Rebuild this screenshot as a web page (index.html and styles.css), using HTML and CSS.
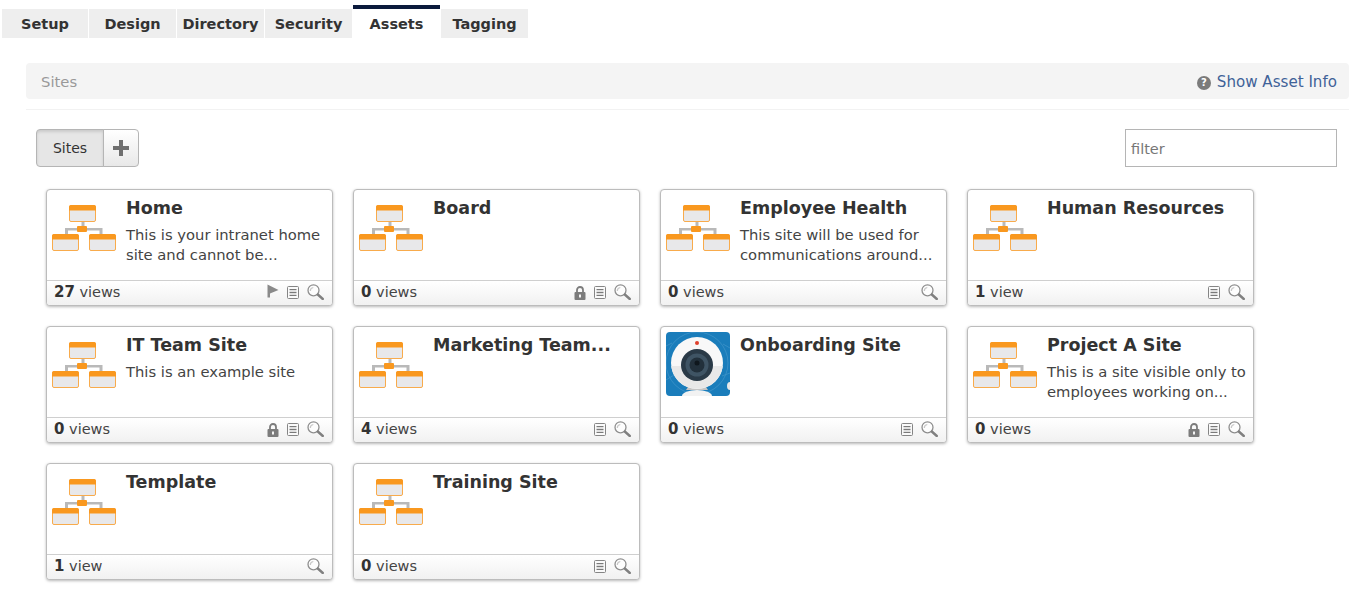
FILE: index.html
```html
<!DOCTYPE html>
<html lang="en">
<head>
<meta charset="utf-8">
<title>Assets</title>
<link rel="stylesheet" href="styles.css">
</head>
<body>
<svg class="defs" width="0" height="0" aria-hidden="true">
  <defs>
    <symbol id="site" viewBox="0 0 64 46">
      <path d="M29.500 16h3v6h-3zM13 23h37v2.500H13zM13 23h3v7h-3zM47.500 23h3v7h-3z" fill="#b9b9b9"/>
      <rect x="25" y="21" width="10" height="6" rx="1" fill="#f9981f"/>
      <rect x="17.500" y="0.500" width="26" height="16" rx="1.500" fill="#e8e8ea" stroke="#f8ab4c"/>
      <path d="M17 2a2 2 0 0 1 2-2h23a2 2 0 0 1 2 2v3.500H17z" fill="#f9981f"/>
      <rect x="0.500" y="29.500" width="26" height="16" rx="1.500" fill="#e8e8ea" stroke="#f8ab4c"/>
      <path d="M0 31a2 2 0 0 1 2-2h23a2 2 0 0 1 2 2v3.500H0z" fill="#f9981f"/>
      <rect x="37.500" y="29.500" width="26" height="16" rx="1.500" fill="#e8e8ea" stroke="#f8ab4c"/>
      <path d="M37 31a2 2 0 0 1 2-2h23a2 2 0 0 1 2 2v3.500H37z" fill="#f9981f"/>
    </symbol>
    <symbol id="flag" viewBox="0 0 12 14">
      <path d="M0.500 0.500 11.500 6 3 9.500V13.500H0.500z" fill="#8a8a8a"/>
    </symbol>
    <symbol id="doc" viewBox="0 0 12 13">
      <rect x="0.500" y="0.500" width="11" height="12" rx="1" fill="#fafafa" stroke="#858585"/>
      <path d="M2.500 3.500h7M2.500 6.500h7M2.500 9.500h7" stroke="#7a7a7a" stroke-width="1"/>
      <path d="M2.500 5h7M2.500 8h7" stroke="#c4c4c4" stroke-width="1"/>
    </symbol>
    <symbol id="lens" viewBox="0 0 17 16">
      <circle cx="6.500" cy="6.300" r="5.500" fill="#fdfdfd" stroke="#8f8f8f" stroke-width="1.300"/>
      <path d="M3.300 7a3.500 3.500 0 0 1 3-3.500" fill="none" stroke="#c8c8c8" stroke-width="1.200"/>
      <path d="M10.800 10.500l5 4.500" stroke="#808080" stroke-width="2.400" stroke-linecap="round"/>
    </symbol>
    <symbol id="lock" viewBox="0 0 12 14">
      <path d="M3 6V4a3 3 0 0 1 6 0v2" fill="none" stroke="#7c7c7c" stroke-width="1.800"/>
      <rect x="0.500" y="6" width="11" height="8" rx="1" fill="#7c7c7c"/>
      <rect x="5" y="8.500" width="2" height="3" fill="#f4f4f4"/>
    </symbol>
    <symbol id="cam" viewBox="0 0 64 64">
      <rect width="64" height="64" rx="4" fill="#1a7dbb"/>
      <g fill="none" stroke="#4a9bcc" stroke-width="0.600">
        <circle cx="31" cy="31" r="31"/>
        <path d="M0 14l6-3M57 12l7 4M0 48l8-5M56 44l8-3"/>
      </g>
      <ellipse cx="31" cy="64" rx="15" ry="6" fill="#f2f2f2"/>
      <path d="M20 58h22l-2-3H22z" fill="#c4c4c4"/>
      <ellipse cx="64" cy="54" rx="3" ry="4" fill="#e8e8e8"/>
      <circle cx="31" cy="31" r="26" fill="#f8f8f8"/>
      <path d="M5.200 34h51.600a26 26 0 0 1-51.600 0z" fill="#e8e8e8"/>
      <circle cx="31" cy="11" r="2" fill="#e0402c"/>
      <circle cx="31" cy="33" r="16" fill="#2a3a47"/>
      <circle cx="31" cy="33" r="11.500" fill="#3f5464"/>
      <circle cx="31" cy="33" r="7.500" fill="#22303b"/>
      <circle cx="31" cy="31" r="2.500" fill="#0f171d"/>
    </symbol>
  </defs>
</svg>

<nav class="tabs">
  <a class="tab">Setup</a>
  <a class="tab">Design</a>
  <a class="tab">Directory</a>
  <a class="tab">Security</a>
  <a class="tab active">Assets</a>
  <a class="tab">Tagging</a>
</nav>

<main class="panel">
  <div class="crumbbar">
    <span class="crumb">Sites</span>
    <a class="info"><span class="help">?</span>Show Asset Info</a>
  </div>
  <div class="rule"></div>
  <div class="toolbar">
    <div class="btngroup">
      <button class="btn on">Sites</button>
      <button class="btn add" aria-label="Add"><svg width="16" height="16" viewBox="0 0 16 16"><path d="M6 0h4v6h6v4h-6v6H6v-6H0V6h6z" fill="#6f6f6f"/></svg></button>
    </div>
    <input class="filter" placeholder="filter">
  </div>
  <section class="cards">
    <article class="card">
      <div class="body"><svg class="thumb"><use href="#site"/></svg><div class="text"><h3>Home</h3><p>This is your intranet home site and cannot be...</p></div></div>
      <footer><span><b>27</b> views</span><span class="acts"><svg class="i-flag"><use href="#flag"/></svg><svg class="i-doc"><use href="#doc"/></svg><svg class="i-lens"><use href="#lens"/></svg></span></footer>
    </article>
    <article class="card">
      <div class="body"><svg class="thumb"><use href="#site"/></svg><div class="text"><h3>Board</h3></div></div>
      <footer><span><b>0</b> views</span><span class="acts"><svg class="i-lock"><use href="#lock"/></svg><svg class="i-doc"><use href="#doc"/></svg><svg class="i-lens"><use href="#lens"/></svg></span></footer>
    </article>
    <article class="card">
      <div class="body"><svg class="thumb"><use href="#site"/></svg><div class="text"><h3>Employee Health</h3><p>This site will be used for communications around...</p></div></div>
      <footer><span><b>0</b> views</span><span class="acts"><svg class="i-lens"><use href="#lens"/></svg></span></footer>
    </article>
    <article class="card">
      <div class="body"><svg class="thumb"><use href="#site"/></svg><div class="text"><h3>Human Resources</h3></div></div>
      <footer><span><b>1</b> view</span><span class="acts"><svg class="i-doc"><use href="#doc"/></svg><svg class="i-lens"><use href="#lens"/></svg></span></footer>
    </article>
    <article class="card">
      <div class="body"><svg class="thumb"><use href="#site"/></svg><div class="text"><h3>IT Team Site</h3><p>This is an example site</p></div></div>
      <footer><span><b>0</b> views</span><span class="acts"><svg class="i-lock"><use href="#lock"/></svg><svg class="i-doc"><use href="#doc"/></svg><svg class="i-lens"><use href="#lens"/></svg></span></footer>
    </article>
    <article class="card">
      <div class="body"><svg class="thumb"><use href="#site"/></svg><div class="text"><h3>Marketing Team...</h3></div></div>
      <footer><span><b>4</b> views</span><span class="acts"><svg class="i-doc"><use href="#doc"/></svg><svg class="i-lens"><use href="#lens"/></svg></span></footer>
    </article>
    <article class="card">
      <div class="body"><svg class="photo"><use href="#cam"/></svg><div class="text"><h3>Onboarding Site</h3></div></div>
      <footer><span><b>0</b> views</span><span class="acts"><svg class="i-doc"><use href="#doc"/></svg><svg class="i-lens"><use href="#lens"/></svg></span></footer>
    </article>
    <article class="card">
      <div class="body"><svg class="thumb"><use href="#site"/></svg><div class="text"><h3>Project A Site</h3><p>This is a site visible only to employees working on...</p></div></div>
      <footer><span><b>0</b> views</span><span class="acts"><svg class="i-lock"><use href="#lock"/></svg><svg class="i-doc"><use href="#doc"/></svg><svg class="i-lens"><use href="#lens"/></svg></span></footer>
    </article>
    <article class="card">
      <div class="body"><svg class="thumb"><use href="#site"/></svg><div class="text"><h3>Template</h3></div></div>
      <footer><span><b>1</b> view</span><span class="acts"><svg class="i-lens"><use href="#lens"/></svg></span></footer>
    </article>
    <article class="card">
      <div class="body"><svg class="thumb"><use href="#site"/></svg><div class="text"><h3>Training Site</h3></div></div>
      <footer><span><b>0</b> views</span><span class="acts"><svg class="i-doc"><use href="#doc"/></svg><svg class="i-lens"><use href="#lens"/></svg></span></footer>
    </article>
  </section>
</main>
</body>
</html>
```
FILE: styles.css
```css
* { box-sizing: border-box; }
html, body { margin: 0; padding: 0; }
body {
  width: 1353px;
  height: 604px;
  overflow: hidden;
  background: #fff;
  color: #333;
  font-family: "DejaVu Sans", Verdana, sans-serif;
  font-size: 14px;
}
.defs { display: block; height: 0; }

.tabs { display: flex; gap: 1px; padding: 5px 0 0 2px; height: 38px; }
.tab {
  width: 87px;
  height: 33px;
  border-top: 4px solid transparent;
  background: #eee content-box;
  color: #333;
  font-weight: bold;
  font-size: 14.500px;
  line-height: 31px;
  text-align: center;
}
.tab:first-child { width: 86px; }
.tab.active { background: #fff; border-top-color: #0b1a3c; }

.panel { padding: 25px 4px 0 26px; }
.crumbbar {
  display: flex;
  align-items: center;
  justify-content: space-between;
  height: 36px;
  padding: 1px 12px 0 15px;
  background: #f4f4f4;
  border-radius: 4px;
}
.crumb { color: #999; font-size: 14.800px; }
.info { display: flex; align-items: center; color: #3f6298; font-size: 15.100px; }
.help {
  display: inline-block;
  width: 14px;
  height: 14px;
  margin-right: 6px;
  margin-top: 2px;
  border-radius: 50%;
  background: #7b7b7b;
  color: #fff;
  font-size: 10px;
  font-weight: bold;
  line-height: 14px;
  text-align: center;
}
.rule { height: 1px; margin-top: 10px; background: #f2f2f2; }

.toolbar {
  display: flex;
  justify-content: space-between;
  align-items: flex-start;
  padding: 19px 12px 0 10px;
}
.btngroup { display: flex; height: 38px; }
.btn {
  height: 38px;
  border: 1px solid #b5b5b5;
  font-family: inherit;
  color: #333;
  padding: 0;
}
.btn.on {
  width: 68px;
  font-size: 14px;
  background: #e6e6e6;
  border-radius: 4px 0 0 4px;
  box-shadow: inset 0 2px 3px rgba(0,0,0,.12);
}
.btn.add {
  width: 36px;
  margin-left: -1px;
  border-radius: 0 4px 4px 0;
  background: linear-gradient(#fff, #e8e8e8);
  display: flex;
  align-items: center;
  justify-content: center;
}
.filter {
  width: 212px;
  height: 38px;
  border: 1px solid #b5b5b5;
  padding: 2px 5px 0;
  font-family: inherit;
  font-size: 14.500px;
  color: #333;
  outline: none;
}
.filter::placeholder { color: #777; opacity: 1; }

.cards {
  display: grid;
  grid-template-columns: repeat(4, 287px);
  grid-auto-rows: 117px;
  gap: 20px;
  padding: 22px 0 0 20px;
}
.card {
  display: flex;
  flex-direction: column;
  border: 1px solid #bcbcbc;
  border-radius: 4px;
  background: #fff;
  box-shadow: 0 1px 3px rgba(0,0,0,.28);
  overflow: hidden;
}
.body { flex: 1; display: flex; min-height: 0; padding: 5px 5px 0; }
.thumb { width: 64px; height: 46px; margin-top: 10px; flex: none; }
.photo { width: 64px; height: 64px; flex: none; }
.text { margin-left: 10px; min-width: 0; }
h3 {
  margin: 2px 0 0;
  font-size: 17.500px;
  line-height: 22px;
  font-weight: bold;
  color: #333;
  white-space: nowrap;
}
p {
  margin: 6px 0 0;
  font-size: 14.750px;
  line-height: 20px;
  color: #444;
}
footer {
  flex: none;
  height: 25px;
  display: flex;
  justify-content: space-between;
  align-items: center;
  padding: 0 8px 2px 7px;
  border-top: 1px solid #cfcfcf;
  background: linear-gradient(#fff, #f1f1f1);
  font-size: 14.500px;
  color: #444;
}
footer b { color: #333; font-size: 15px; }
.acts { display: flex; align-items: center; }
.i-flag { width: 12px; height: 14px; margin: -3px 8px 0 0; }
.i-doc { width: 12px; height: 13px; margin: 1px 8px 0 0; }
.i-lens { width: 17px; height: 16px; margin-top: -1px; }
.i-lock { width: 12px; height: 14px; margin: 1px 8px 0 0; }
```
